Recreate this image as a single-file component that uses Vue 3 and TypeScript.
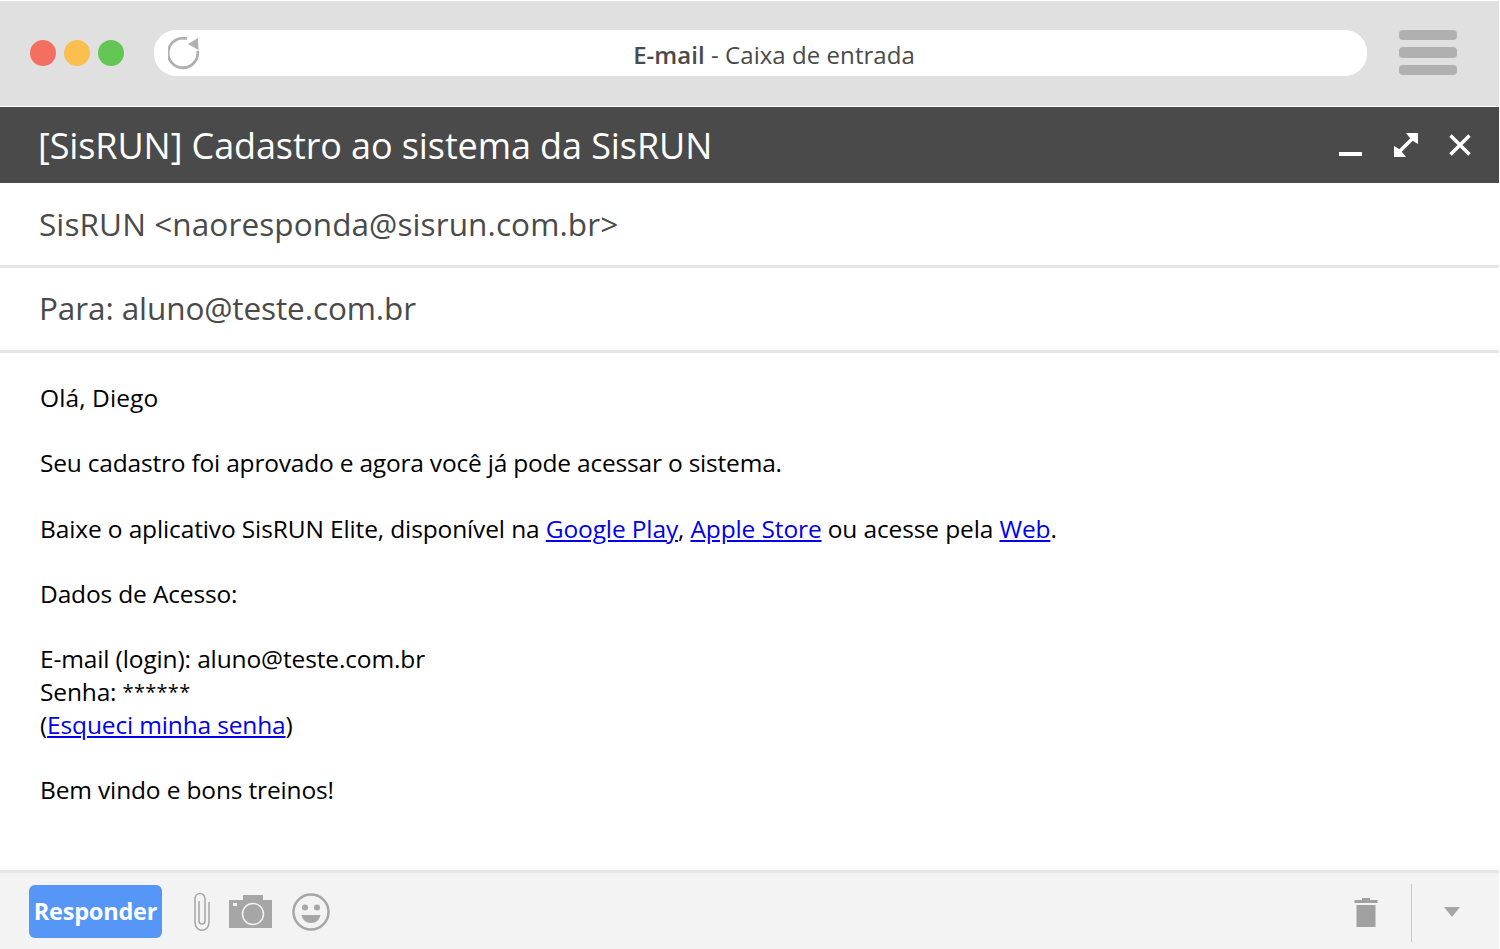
<script setup lang="ts">
const dots: string[] = ['#f46f60', '#fabf4f', '#62c554']
</script>

<template>
  <div class="window">
    <header class="browser">
      <div class="dots"><span v-for="d in dots" :key="d" class="dot" :style="{ background: d }"></span></div>
      <div class="address">
        <svg class="reload" width="36" height="36" viewBox="0 0 36 36">
          <path d="M29.600 16a14.800 14.800 0 1 1-10.600-12.300" fill="none" stroke="#b0b0b0" stroke-width="2.800"/>
          <path d="M20 9 L30 3 L30.500 15 Z" fill="#b0b0b0"/>
        </svg>
        <div class="address-text"><b>E-mail</b> - Caixa de entrada</div>
      </div>
      <div class="menu"><i></i><i></i><i></i></div>
    </header>
    <div class="titlebar">
      <div class="subject">[SisRUN] Cadastro ao sistema da SisRUN</div>
      <div class="controls">
        <svg class="minimize" width="24" height="24" viewBox="0 0 24 24"><rect x="0" y="19" width="23" height="4" fill="#fff"/></svg>
        <svg width="26" height="26" viewBox="0 0 26 26"><path d="M7 19 L19 7" stroke="#fff" stroke-width="3.500"/><path d="M13 1 H25 V12 L20 9 L17 6 Z M1 25 V14 L6 17 L9 20 L13 25 Z" fill="#fff"/></svg>
        <svg width="24" height="24" viewBox="0 0 24 24"><path d="M2.500 2.500 L21.500 21.500 M21.500 2.500 L2.500 21.500" stroke="#fff" stroke-width="3.500"/></svg>
      </div>
    </div>
    <div class="row from">SisRUN &lt;naoresponda@sisrun.com.br&gt;</div>
    <div class="row to">Para: aluno@teste.com.br</div>
    <main class="body">
      <p class="hello">Olá, Diego</p>
      <p class="tight">Seu cadastro foi aprovado e agora você já pode acessar o sistema.</p>
      <p class="loose">Baixe o aplicativo SisRUN Elite, disponível na <a href="#">Google Play</a>, <a href="#">Apple Store</a> ou acesse pela <a href="#">Web</a>.</p>
      <p>Dados de Acesso:</p>
      <p><span class="loose">E-mail (login): aluno@teste.com.br</span><br>Senha: <span class="stars">******</span><br>(<a href="#">Esqueci minha senha</a>)</p>
      <p>Bem vindo e bons treinos!</p>
    </main>
    <footer class="footer">
      <button class="reply">Responder</button>
      <svg class="clip" width="18" height="40" viewBox="0 0 18 40" fill="none" stroke="#a6a6a6" stroke-width="1.500">
        <path d="M6 9 V29 C6 33 12 33 12 29 V7 C12 -0.500 2 0 2 7 V30 C2 41 16 41 16 30 V10"/>
      </svg>
      <svg class="camera" width="44" height="34" viewBox="0 0 44 34">
        <path d="M0 5 H11 V5 H14 V0 H34 V5 H43 V33 H0 Z" fill="#a6a6a6"/>
        <rect x="4" y="8" width="4" height="3" fill="#f3f3f3"/>
        <circle cx="24" cy="19" r="10.500" fill="#a6a6a6" stroke="#f3f3f3" stroke-width="1.500"/>
      </svg>
      <svg class="smile" width="38" height="38" viewBox="0 0 38 38">
        <circle cx="19" cy="19" r="17.500" fill="none" stroke="#a6a6a6" stroke-width="2.500"/>
        <circle cx="13" cy="14.500" r="3" fill="#a6a6a6"/><circle cx="25" cy="14.500" r="3" fill="#a6a6a6"/>
        <path d="M9.500 22 H28.500 C27.500 27 24 30 19 30 C14 30 10.500 27 9.500 22 Z" fill="#a6a6a6"/>
      </svg>
      <div class="spacer"></div>
      <svg class="trash" width="24" height="30" viewBox="0 0 24 30">
        <path d="M8 3 V1 H16 V3 H23.500 V6 H0.500 V3 Z M2.500 8 H21.500 V30 H2.500 Z" fill="#a0a0a0"/>
      </svg>
      <div class="divider"></div>
      <svg class="caret" width="16" height="12" viewBox="0 0 16 12"><path d="M0 1 H16 L8 11 Z" fill="#a6a6a6"/></svg>
    </footer>
  </div>
</template>

<style>
html, body { margin: 0; background: #fff; }
</style>

<style scoped>
.window {
  width: 1499px;
  height: 949px;
  display: flex;
  flex-direction: column;
  font-family: "Open Sans", "Noto Sans", sans-serif;
  overflow: hidden;
}
.browser {
  height: 105px;
  margin-top: 1px;
  flex: none;
  background: #e0e0e0;
  display: flex;
  align-items: center;
  padding: 0 42px 2px 30px;
  box-sizing: border-box;
}
.dots { display: flex; gap: 8px; }
.dot { width: 26px; height: 26px; border-radius: 50%; }
.address {
  margin-left: 30px;
  flex: 1;
  height: 46px;
  border-radius: 22px;
  background: #fff;
  display: flex;
  align-items: center;
  justify-content: center;
  position: relative;
}
.reload { position: absolute; left: 14px; top: 5px; }
.address-text { font-size: 24px; letter-spacing: 0.050px; color: #4a4a4a; padding-left: 27px; margin-top: 3px; }
.address-text b { font-weight: 600; }
.menu { margin-left: 32px; width: 58px; display: flex; flex-direction: column; gap: 7px; }
.menu i { display: block; height: 10.500px; border-radius: 4px; background: #b0b0b0; }
.titlebar {
  height: 76px;
  flex: none;
  margin-top: 1px;
  background: #4a4a4a;
  color: #fff;
  display: flex;
  align-items: center;
  justify-content: space-between;
  padding: 0 27px 0 38px;
}
.subject { font-size: 36px; letter-spacing: -0.100px; }
.controls { display: flex; align-items: center; gap: 29px; }
.minimize { margin-right: 1px; }
.row {
  flex: none;
  color: #4a4a4a;
  display: flex;
  align-items: center;
  border-bottom: 3px solid #e6e6e6;
  box-sizing: border-box;
  font-size: 31.500px;
}
.from { height: 85px; padding: 0 0 2px 39px; letter-spacing: 0.100px; }
.to { height: 85px; padding: 0 0 3px 39px; letter-spacing: -0.100px; }
.body {
  flex: 1;
  padding: 28px 40px 0;
  font-size: 24.500px;
  line-height: 33px;
  letter-spacing: -0.150px;
  color: #000;
}
.body p { margin: 0 0 32.300px; }
.body a { color: #0000ee; }
.hello { letter-spacing: 0.100px; }
.tight { letter-spacing: -0.200px; }
.loose { letter-spacing: -0.130px; }
.body p.loose { letter-spacing: -0.130px; }
.stars { font-size: 20px; line-height: 0; letter-spacing: 0.300px; vertical-align: 2px; }
.footer {
  height: 79px;
  flex: none;
  background: #f3f3f3;
  border-top: 3px solid #e6e6e6;
  box-sizing: border-box;
  display: flex;
  align-items: center;
  padding: 0 39px 0 29px;
}
.reply {
  width: 133px;
  height: 53px;
  border: 0;
  padding: 0;
  border-radius: 6px;
  background: #5596f6;
  color: #fff;
  font-family: inherit;
  font-weight: 700;
  font-size: 23.500px;
  letter-spacing: -0.200px;
}
.clip { margin-left: 31px; margin-top: 2px; }
.camera { margin-left: 18px; margin-top: 2px; }
.smile { margin-left: 19px; margin-top: 2px; }
.spacer { flex: 1; }
.trash { margin-top: 2px; }
.divider { width: 1px; height: 58px; background: #c8c8c8; margin: 3px 32px 0 33px; }
.caret { margin-top: 2px; }
</style>
